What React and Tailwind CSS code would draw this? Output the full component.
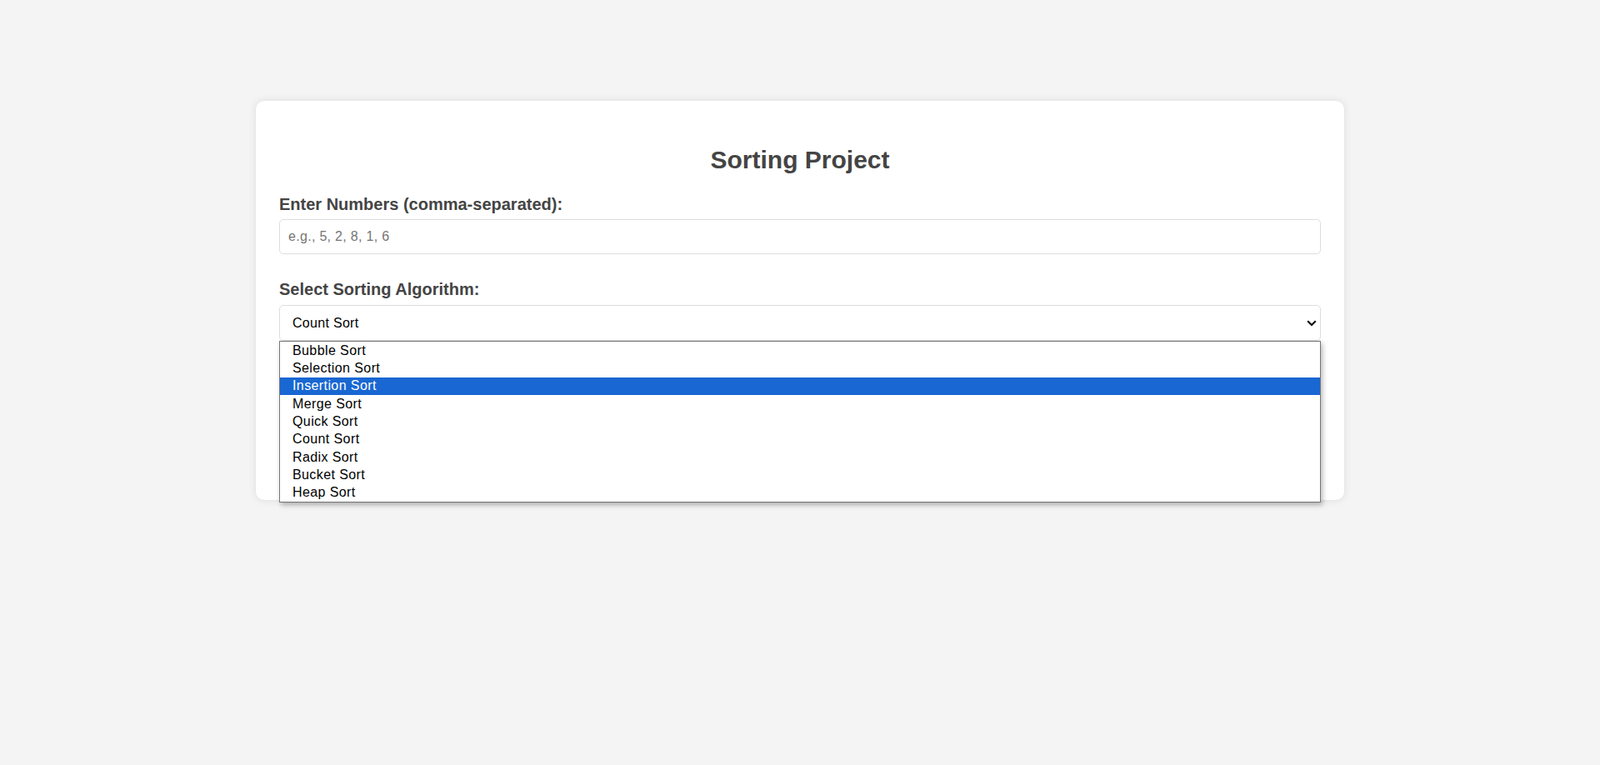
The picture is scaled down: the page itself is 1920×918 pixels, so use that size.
import { useState } from "react";

const algorithms = [
  "Bubble Sort",
  "Selection Sort",
  "Insertion Sort",
  "Merge Sort",
  "Quick Sort",
  "Count Sort",
  "Radix Sort",
  "Bucket Sort",
  "Heap Sort",
];

export default function App() {
  const [numbers, setNumbers] = useState("");
  const [algorithm, setAlgorithm] = useState("Count Sort");
  const [hovered, setHovered] = useState("Insertion Sort");

  return (
    <div
      className="min-h-screen bg-[#f4f4f4] pt-[121px]"
      style={{ fontFamily: '"Liberation Sans", Arial, sans-serif' }}
    >
      <div className="mx-auto min-h-[479px] w-[1306px] rounded-[10px] bg-white px-[28px] pt-[28px] shadow-[0_0_10px_rgba(0,0,0,0.1)]">
        <h2 className="mt-[26px] mb-[25px] text-center text-[30px] leading-[34px] font-bold text-[#444]">
          Sorting Project
        </h2>

        <label className="mb-[6px] block text-[20px] leading-[23px] font-bold text-[#444]">
          Enter Numbers (comma-separated):
        </label>
        <input
          type="text"
          value={numbers}
          onChange={(e) => setNumbers(e.target.value)}
          placeholder="e.g., 5, 2, 8, 1, 6"
          className="block h-[42px] w-full rounded-[5px] border border-[#ddd] px-[10px] text-[16px] tracking-[0.3px] text-black outline-none placeholder:text-[#757575]"
        />

        <label className="mt-[31px] mb-[7px] block text-[20px] leading-[23px] font-bold text-[#444]">
          Select Sorting Algorithm:
        </label>
        <div className="relative">
          <select
            value={algorithm}
            onChange={(e) => setAlgorithm(e.target.value)}
            className="block h-[43px] w-full appearance-none rounded-[5px] border border-[#ddd] bg-white pl-[15px] text-[16px] tracking-[0.3px] text-black outline-none"
          >
            {algorithms.map((name) => (
              <option key={name} value={name}>
                {name}
              </option>
            ))}
          </select>
          <svg
            className="pointer-events-none absolute top-[18px] right-[5px]"
            width="12"
            height="8"
            viewBox="0 0 12 8"
            fill="none"
          >
            <path d="M1.2 1.3 L6 6 L10.8 1.3" stroke="#111" strokeWidth="2.2" />
          </svg>

          <ul className="absolute top-full right-0 left-0 z-10 border border-[#767676] bg-white shadow-[2px_3px_6px_rgba(0,0,0,0.28)]">
            {algorithms.map((name) => (
              <li
                key={name}
                onMouseEnter={() => setHovered(name)}
                onClick={() => setAlgorithm(name)}
                className={`flex h-[21.33px] items-center pl-[15px] text-[16px] tracking-[0.4px] ${
                  hovered === name ? "bg-[#1967d2] text-white" : "text-black"
                }`}
              >
                {name}
              </li>
            ))}
          </ul>
        </div>
      </div>
    </div>
  );
}
